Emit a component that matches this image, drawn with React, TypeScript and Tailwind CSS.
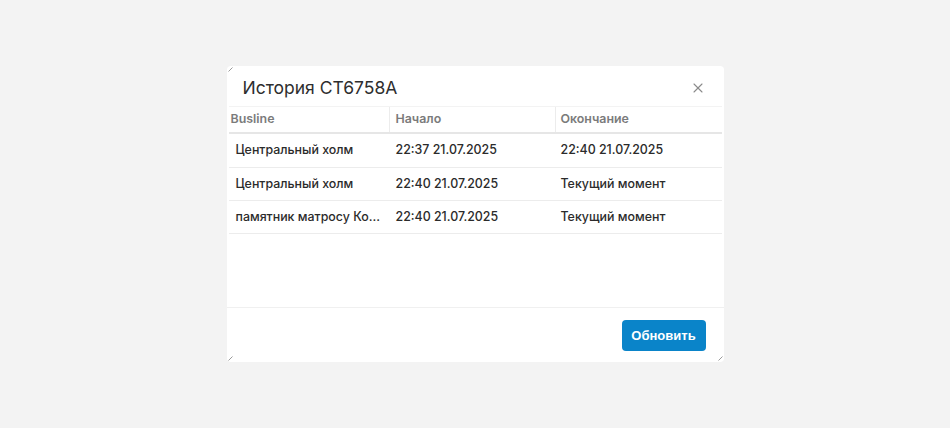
import React from 'react';
import { X } from 'lucide-react';

interface Row {
  busline: string;
  start: string;
  end: string;
}

const rows: Row[] = [
  { busline: 'Центральный холм', start: '22:37 21.07.2025', end: '22:40 21.07.2025' },
  { busline: 'Центральный холм', start: '22:40 21.07.2025', end: 'Текущий момент' },
  { busline: 'памятник матросу Кошке', start: '22:40 21.07.2025', end: 'Текущий момент' },
];

function Grip({ className }: { className: string }) {
  return (
    <svg className={`absolute ${className}`} width="5" height="5" viewBox="0 0 5 5">
      <path d="M0.5 4.5 L4.5 0.5" stroke="#9a9a9a" strokeWidth="1" />
    </svg>
  );
}

export default function App() {
  return (
    <div
      className="w-full h-[428px] bg-[#f3f3f3] flex justify-center pt-[66px]"
      style={{ fontFamily: 'Inter, "Noto Sans", sans-serif' }}
    >
      <div className="relative w-[497px] h-[296px] bg-white rounded-[4px] flex flex-col">
        <Grip className="left-[1px] top-[1px]" />
        <Grip className="left-[1px] bottom-[1px]" />
        <Grip className="right-[1px] bottom-[1px]" />

        {/* Header */}
        <div className="h-[40px] flex items-center justify-between pl-4 pr-[18px]">
          <h2 className="text-[17.5px] text-[#2e2e2e] font-normal pt-[4px]">История CT6758A</h2>
          <X size={16} strokeWidth={1.6} className="text-[#8a8a8a] mt-[4px]" />
        </div>

        {/* Table */}
        <div className="mx-[2px] text-[12.4px]">
          <div className="flex h-[28px] items-center border-t border-[#f3f3f3] border-b-2 border-b-[#e6e6e6] text-[#7b7b7b] font-semibold">
            <div className="w-[161px] pl-[2px] h-full flex items-center border-r border-[#ececec]">Busline</div>
            <div className="w-[166px] pl-[6px] h-full flex items-center border-r border-[#ececec]">Начало</div>
            <div className="flex-1 pl-[5px] h-full flex items-center">Окончание</div>
          </div>
          {rows.map((r, i) => (
            <div
              key={i}
              className={`flex ${i === 0 ? 'h-[34px]' : 'h-[33px]'} items-center border-b border-[#ececec] text-[#2b2b2b] font-medium`}
            >
              <div className="w-[161px] pl-[7px] pr-[5px] truncate">{r.busline}</div>
              <div className="w-[166px] pl-[6px]">{r.start}</div>
              <div className="flex-1 pl-[5px]">{r.end}</div>
            </div>
          ))}
        </div>

        <div className="flex-1" />

        {/* Footer */}
        <div className="h-[55px] border-t border-[#f0f0f0] flex items-start justify-end pt-[12px] pr-[18px]">
          <button
            className="h-[31px] w-[84px] rounded-[4px] bg-[#0a84c9] text-white text-[13px] font-semibold"
            style={{ fontFamily: '"Liberation Sans", Arial, sans-serif' }}
          >
            Обновить
          </button>
        </div>
      </div>
    </div>
  );
}
